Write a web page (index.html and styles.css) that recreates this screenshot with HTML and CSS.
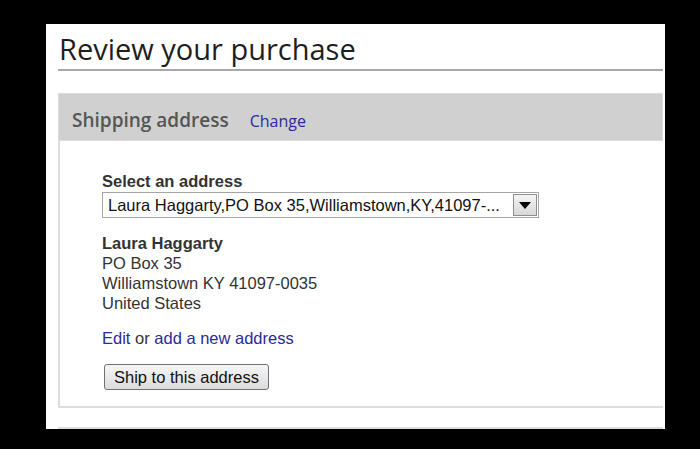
FILE: index.html
```html
<!DOCTYPE html>
<html lang="en">
<head>
    <meta charset="UTF-8">
    <title>Review your purchase</title>
    <link rel="stylesheet" href="styles.css">
</head>
<body>
    <!-- white page frame -->
    <div class="page">
        <h1 class="title">Review your purchase</h1>

        <div class="panel">
            <div class="panel-head">
                <h2>Shipping address</h2>
                <a href="#" class="change">Change</a>
            </div>
            <div class="panel-body">
                <label class="field-label" for="addr">Select an address</label>
                <div class="select">
                    <span class="select-text">Laura Haggarty,PO Box 35,Williamstown,KY,41097-...</span>
                    <span class="select-btn">
                        <svg width="12" height="7" viewBox="0 0 12 7"><polygon points="0,0 12,0 6,7" fill="#000"/></svg>
                    </span>
                </div>

                <div class="address">
                    <div class="name">Laura Haggarty</div>
                    <div>PO Box 35</div>
                    <div>Williamstown KY 41097-0035</div>
                    <div>United States</div>
                </div>

                <div class="links">
                    <a href="#">Edit</a> or <a href="#">add a new address</a>
                </div>

                <button class="ship" type="button">Ship to this address</button>
            </div>
        </div>

        <div class="rule"></div>
    </div>
</body>
</html>
```

FILE: styles.css
```css
/* page */
body {
    margin: 0;
    background-color: #000;
    height: 449px;
    overflow: hidden;
}

.page {
    margin: 24px 0 0 46px;
    width: 605px;
    height: 405px;
    padding: 0 2px 0 12px;
    background-color: #fff;
}

.title {
    margin: 0;
    padding: 7px 0 0 1px;
    height: 38px;
    font-family: "Open Sans", sans-serif;
    font-weight: normal;
    font-size: 29px;
    line-height: 36px;
    color: #1e1e1e;
    border-bottom: 2px solid #a8a8a8;
}

/* shipping panel */
.panel {
    margin-top: 22px;
}

.panel-head {
    display: flex;
    align-items: baseline;
    height: 46px;
    padding-left: 13px;
    background-color: #d0d0d0;
    border: 1px solid #dcdcdc;
}

.panel-head h2 {
    margin: 0;
    font-family: "Open Sans", sans-serif;
    font-weight: 600;
    font-size: 19px;
    line-height: 52px;
    color: #555;
}

.change {
    margin-left: 21px;
    font-family: "Open Sans", sans-serif;
    font-size: 16px;
    color: #2a2a9c;
    text-decoration: none;
}

.panel-body {
    height: 267px;
    padding: 30px 0 0 42px;
    border-left: 2px solid #ddd;
    border-bottom: 2px solid #ddd;
    box-sizing: border-box;
    font-family: "Liberation Sans", Arial, sans-serif;
    font-size: 16.5px;
    color: #333;
}

.field-label {
    display: block;
    font-weight: bold;
    line-height: 20px;
}

.select {
    display: flex;
    align-items: center;
    width: 435px;
    height: 24px;
    margin-top: 1px;
    border: 1px solid #a5a5a5;
    color: #111;
}

.select-text {
    flex: 1;
    padding-left: 5px;
    white-space: nowrap;
    overflow: hidden;
}

.select-btn {
    display: flex;
    justify-content: center;
    align-items: center;
    width: 22px;
    height: 20px;
    margin-right: 1px;
    border: 1px solid #8e8e8e;
    background: linear-gradient(#f4f4f4, #d8d8d8);
}

.address {
    margin-top: 15px;
    line-height: 20px;
}

.address .name {
    font-weight: bold;
}

.links {
    margin-top: 15px;
    line-height: 20px;
}

.links a {
    color: #2a2a9c;
    text-decoration: none;
}

.ship {
    margin: 16px 0 0 2px;
    height: 26px;
    padding: 0 9px;
    font-family: "Liberation Sans", Arial, sans-serif;
    font-size: 16.5px;
    color: #111;
    border: 1px solid #707070;
    border-radius: 3px;
    background: linear-gradient(#f6f6f6, #dcdcdc);
}

.rule {
    margin-top: 19px;
    border-top: 2px solid #ddd;
}
```
